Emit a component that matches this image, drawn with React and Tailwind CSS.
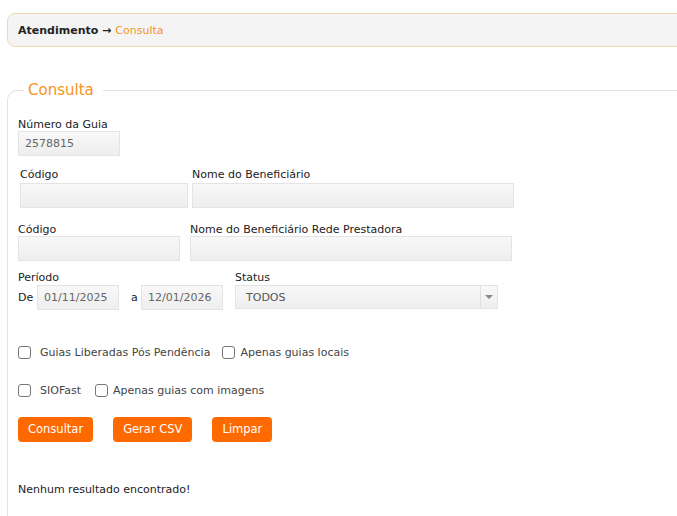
import React from "react";

const font = { fontFamily: '"DejaVu Sans", Verdana, sans-serif' };

function Input({ w, value, className = "" }) {
  return (
    <div
      className={`h-[25px] border border-[#e4e4e4] bg-linear-to-b from-[#f8f8f8] to-[#eeeeee] flex items-center pl-[6px] text-[11px] text-[#666] ${className}`}
      style={{ width: w }}
    >
      {value}
    </div>
  );
}

function Check({ label, className = "" }) {
  return (
    <div className={`flex items-center ${className}`}>
      <span className="w-[13px] h-[13px] border border-[#777] rounded-[3px] bg-white shrink-0" />
      <span className="ml-[9px]">{label}</span>
    </div>
  );
}

function Btn({ children }) {
  return (
    <button className="h-[25px] px-[10px] rounded-[4px] bg-[#ff6a00] text-white text-[11.5px]">
      {children}
    </button>
  );
}

export default function App() {
  return (
    <div className="w-[677px] h-[516px] overflow-hidden bg-white text-[11px] text-[#222] leading-[13px]" style={font}>
      <div className="ml-[7px] mt-[13px] w-[720px] h-[34px] rounded-[8px] border border-[#f2d8b2] bg-[#f4f4f4] flex items-center pl-[10px] pt-px">
        <span className="font-bold text-[#222]">Atendimento →</span>
        <span className="ml-[4px] text-[#f7941d]">Consulta</span>
      </div>

      <fieldset className="ml-[7px] mt-[34px] w-[720px] h-[460px] border-t border-l border-[#e3e3e3] rounded-tl-[10px] pl-[10px]">
        <legend className="ml-[6px] pl-[4px] pr-[9px] text-[15px] leading-[18px] text-[#f7941d]">Consulta</legend>

        <div className="mt-[19px]">
          <div>Número da Guia</div>
          <Input w={102} value="2578815" className="h-[24px]" />
        </div>

        <div className="mt-[12px] ml-[2px] flex gap-[4px]">
          <div>
            <div className="mb-[2px]">Código</div>
            <Input w={168} />
          </div>
          <div>
            <div className="mb-[2px]">Nome do Beneficiário</div>
            <Input w={322} />
          </div>
        </div>

        <div className="mt-[15px] flex gap-[10px]">
          <div>
            <div>Código</div>
            <Input w={162} />
          </div>
          <div>
            <div>Nome do Beneficiário Rede Prestadora</div>
            <Input w={322} />
          </div>
        </div>

        <div className="mt-[10px] flex gap-[12px]">
          <div>
            <div className="mb-px">Período</div>
            <div className="flex items-center">
              <span className="w-[19px]">De</span>
              <Input w={82} value="01/11/2025" className="h-[24px]" />
              <span className="ml-[12px] w-[10px]">a</span>
              <Input w={82} value="12/01/2026" className="h-[24px]" />
            </div>
          </div>
          <div>
            <div className="mb-px">Status</div>
            <div className="w-[263px] h-[24px] border border-[#e4e4e4] bg-linear-to-b from-[#f8f8f8] to-[#eeeeee] flex items-center text-[#555]">
              <span className="flex-1 pl-[10px]">TODOS</span>
              <span className="w-[17px] h-full border-l border-[#e0e0e0] flex items-center justify-center">
                <span className="w-0 h-0 border-l-[4px] border-r-[4px] border-t-[4px] border-l-transparent border-r-transparent border-t-[#888]" />
              </span>
            </div>
          </div>
        </div>

        <div className="mt-[36px] flex items-center text-[#444]">
          <Check label="Guias Liberadas Pós Pendência" />
          <Check label="Apenas guias locais" className="ml-[12px] [&>span:last-child]:ml-[5px]" />
        </div>

        <div className="mt-[25px] flex items-center text-[#444]">
          <Check label="SIOFast" />
          <Check label="Apenas guias com imagens" className="ml-[14px] [&>span:last-child]:ml-[5px]" />
        </div>

        <div className="mt-[20px] flex gap-[20px]">
          <Btn>Consultar</Btn>
          <Btn>Gerar CSV</Btn>
          <Btn>Limpar</Btn>
        </div>

        <div className="mt-[41px] text-[#222]">Nenhum resultado encontrado!</div>
      </fieldset>
    </div>
  );
}
